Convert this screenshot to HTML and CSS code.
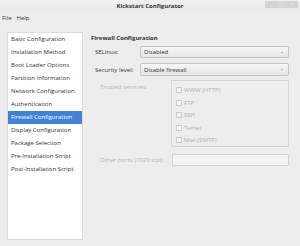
FILE: index.html
```html
<!DOCTYPE html>
<html lang="en">
<head>
    <meta charset="UTF-8">
    <title>Kickstart Configurator</title>
    <link rel="stylesheet" href="styles.css">
</head>
<body>
    <!-- Title bar -->
    <header class="titlebar">
        <span class="title">Kickstart Configurator</span>
        <div class="win-buttons">
            <span class="win-btn">_</span>
            <span class="win-btn">&#9633;</span>
            <span class="win-btn">&#215;</span>
        </div>
    </header>

    <!-- Menu bar -->
    <nav class="menubar">
        <span class="menu-item">File</span>
        <span class="menu-item">Help</span>
    </nav>

    <div class="main">
        <!-- Section list -->
        <ul class="sidebar">
            <li>Basic Configuration</li>
            <li>Installation Method</li>
            <li>Boot Loader Options</li>
            <li>Partition Information</li>
            <li>Network Configuration</li>
            <li>Authentication</li>
            <li class="selected">Firewall Configuration</li>
            <li>Display Configuration</li>
            <li>Package Selection</li>
            <li>Pre-Installation Script</li>
            <li>Post-Installation Script</li>
        </ul>

        <!-- Firewall page -->
        <section class="content">
            <h1 class="page-title">Firewall Configuration</h1>

            <div class="form">
                <label class="form-label">SELinux:</label>
                <div class="combo combo-first">
                    <span>Disabled</span>
                    <span class="chevron">&#8964;</span>
                </div>

                <label class="form-label">Security level:</label>
                <div class="combo">
                    <span>Disable firewall</span>
                    <span class="chevron">&#8964;</span>
                </div>
            </div>

            <div class="disabled-block">
                <div class="trusted">
                    <span class="form-label">Trusted services:</span>
                    <div class="listbox">
                        <div class="check-row"><span class="checkbox"></span>WWW (HTTP)</div>
                        <div class="check-row"><span class="checkbox"></span>FTP</div>
                        <div class="check-row"><span class="checkbox"></span>SSH</div>
                        <div class="check-row"><span class="checkbox"></span>Telnet</div>
                        <div class="check-row"><span class="checkbox"></span>Mail (SMTP)</div>
                    </div>
                </div>

                <div class="ports">
                    <span class="form-label">Other ports (1029:tcp):</span>
                    <div class="entry"></div>
                </div>
            </div>
        </section>
    </div>
</body>
</html>
```

FILE: styles.css
```css
body {
    margin: 0;
    width: 300px;
    height: 246px;
    overflow: hidden;
    background-color: #ededed;
    font-family: "Open Sans", "DejaVu Sans", sans-serif;
    font-size: 6px;
    color: #2e3436;
}

/* Title bar */
.titlebar {
    position: relative;
    height: 11px;
    display: flex;
    align-items: center;
    justify-content: center;
    background: linear-gradient(#f0f0f0, #e8e8e8);
}

.title {
    font-weight: bold;
}

.win-buttons {
    position: absolute;
    top: 1px;
    right: 2px;
    display: flex;
    background-color: #d3d3d3;
    border-radius: 1px;
}

.win-btn {
    width: 11px;
    height: 7px;
    line-height: 7px;
    font-size: 5px;
    text-align: center;
    color: #f4f4f4;
}

/* Menu bar */
.menubar {
    display: flex;
    gap: 5px;
    height: 14px;
    align-items: center;
    padding-left: 2px;
}

/* Layout */
.main {
    display: flex;
    gap: 9px;
    padding: 8px 11px 0 8px;
}

/* Sidebar list */
.sidebar {
    list-style: none;
    margin: 0;
    padding: 0;
    width: 74px;
    height: 206px;
    background-color: #ffffff;
    box-shadow: 0 0 0 1px #dcdcdc;
}

.sidebar li {
    height: 13px;
    line-height: 13px;
    padding-left: 3px;
    white-space: nowrap;
}

.sidebar li.selected {
    background-color: #4281d4;
    color: #ffffff;
}

/* Content */
.content {
    flex: 1;
}

.page-title {
    margin: 0;
    font-size: 6px;
    font-weight: bold;
    height: 10px;
    line-height: 10px;
}

.form {
    display: grid;
    grid-template-columns: 44px 1fr;
    align-items: center;
    row-gap: 5px;
    padding-left: 4px;
    margin-top: 3px;
}

.combo {
    height: 11px;
    display: flex;
    align-items: center;
    justify-content: space-between;
    padding: 0 4px 0 3px;
    border: 1px solid #c4c4c4;
    border-radius: 2px;
    background: linear-gradient(#f6f6f6, #e6e6e6);
    margin-left: 1px;
}

.combo-first {
    height: 10px;
}

.chevron {
    font-size: 5px;
    color: #777777;
    line-height: 5px;
    margin-top: -2px;
}

/* Disabled section */
.disabled-block {
    color: #b2b2b2;
    padding-left: 9px;
    margin-top: 4px;
}

.trusted {
    display: flex;
    align-items: flex-start;
}

.trusted .form-label {
    width: 71px;
    margin-top: 3px;
}

.listbox {
    flex: 1;
    height: 67px;
    border: 1px solid #d6d6d6;
    padding-top: 3px;
    box-sizing: border-box;
}

.check-row {
    display: flex;
    align-items: center;
    gap: 2px;
    height: 12.5px;
    padding-left: 4px;
}

.checkbox {
    width: 4px;
    height: 4px;
    border: 1px solid #cccccc;
    background-color: #f6f6f6;
}

.ports {
    display: flex;
    align-items: center;
    margin-top: 7px;
}

.ports .form-label {
    width: 72px;
}

.entry {
    flex: 1;
    height: 10px;
    border: 1px solid #d2d2d2;
    border-radius: 1px;
    background-color: #f3f3f3;
}
```
